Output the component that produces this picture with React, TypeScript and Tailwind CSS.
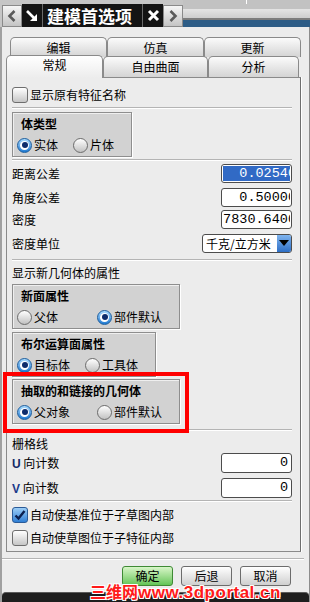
import type { ReactNode } from "react";

const cjk = "font-['Noto_Sans_CJK_SC','Noto_Sans',sans-serif]";

function Radio({ on }: { on?: boolean }) {
  return on ? (
    <span className="w-[15px] h-[15px] rounded-full border border-[#1d5e9e] bg-gradient-to-b from-[#a8dcff] to-[#1a7ad2] flex items-center justify-center shrink-0">
      <span className="w-[9px] h-[9px] rounded-full bg-white flex items-center justify-center">
        <span className="w-[6px] h-[6px] rounded-full bg-[#0c2c6c]" />
      </span>
    </span>
  ) : (
    <span className="w-[15px] h-[15px] rounded-full border border-[#6c6c6c] bg-gradient-to-b from-white to-[#c2c2c2] shrink-0" />
  );
}

function Check({ on }: { on?: boolean }) {
  return on ? (
    <span className="w-[16px] h-[16px] rounded-[3px] border border-[#2b5b98] bg-gradient-to-b from-[#9bcdf6] to-[#2f7fd4] flex items-center justify-center shrink-0">
      <svg width="12" height="12" viewBox="0 0 12 12">
        <path d="M1.5 6.5 L4.5 9.5 L10.5 2" fill="none" stroke="#0b1f4e" strokeWidth="2.4" />
      </svg>
    </span>
  ) : (
    <span className="w-[16px] h-[16px] rounded-[3px] border border-[#6e6e6e] bg-gradient-to-b from-white to-[#c6c6c6] shrink-0" />
  );
}

function Sep() {
  return <div className="h-[2px] border-t border-[#b4b4b4] border-b border-b-white" />;
}

function Group({ title, w, first, opts }: { title: string; w: string; first: string; opts: [string, boolean][] }) {
  return (
    <div className={`${w} h-[45px] bg-[#d2d2d2] border border-[#8e8e8e] shadow-[inset_1px_1px_0_#efefef,1px_1px_0_#ffffff] pl-[4px] pt-[3px]`}>
      <div className="h-[16px] pl-[4px] text-[12px] leading-[16px] font-bold">{title}</div>
      <div className="flex items-center mt-[5px] h-[16px]">
        <div className={`flex items-center gap-[2px] ${first}`}>
          <Radio on={opts[0][1]} />
          <span className="text-[12px]">{opts[0][0]}</span>
        </div>
        <div className="flex items-center gap-[2px]">
          <Radio on={opts[1][1]} />
          <span className="text-[12px]">{opts[1][0]}</span>
        </div>
      </div>
    </div>
  );
}

function Field({ label, children, mt }: { label: ReactNode; children: ReactNode; mt: string }) {
  return (
    <div className={`flex items-center justify-between h-[19px] ${mt}`}>
      <span className="text-[12px]">{label}</span>
      {children}
    </div>
  );
}

function Input({ value, sel, pad }: { value: string; sel?: boolean; pad?: boolean }) {
  return (
    <div className="w-[71px] h-full rounded-[3px] border border-[#4c4c4c] bg-white p-[1px] overflow-hidden">
      <div
        className={`h-full w-full flex items-center justify-end overflow-hidden font-['Liberation_Mono',monospace] text-[13.5px] leading-none ${
          sel ? "bg-[#316ac5] text-white" : "text-black"
        }`}
      >
        <span className={`whitespace-nowrap ${pad ? "mr-[2px]" : "-mr-[6px]"}`}>{value}</span>
      </div>
    </div>
  );
}

function Tab({ label, w, h, sel }: { label: string; w: string; h: string; sel?: boolean }) {
  return (
    <div
      className={`${w} ${h} rounded-t-[5px] border border-b-0 border-[#8a8a8a] flex items-center justify-center text-[12px] ${
        sel ? "bg-gradient-to-b from-white to-[#ececec] relative z-10 -mb-[1px] pb-[4px]" : "bg-gradient-to-b from-[#fbfbfb] to-[#d4d4d4]"
      }`}
    >
      {label}
    </div>
  );
}

function Btn({ label, ok }: { label: string; ok?: boolean }) {
  return (
    <div
      className={`w-[51px] h-[20px] rounded-[3px] border flex items-center justify-center text-[12px] ${
        ok ? "border-[#3f8a35] bg-gradient-to-b from-[#d8f6c8] to-[#62c456]" : "border-[#6c6c6c] bg-gradient-to-b from-white to-[#cfcfcf]"
      }`}
    >
      {label}
    </div>
  );
}

export default function App() {
  return (
    <div className={`w-[310px] h-[602px] bg-[#ececec] flex flex-col overflow-hidden relative text-black ${cjk}`}>
      {/* 标题栏 */}
      <div className="h-[27px] flex shrink-0 bg-[#c6c6c6]">
        <div className="flex items-end pl-[2px]">
          <div className="w-[20px] h-[22px] border border-[#8a8a8a] bg-gradient-to-b from-[#f6f6f6] to-[#c4c4c4] flex items-center justify-center">
            <svg width="10" height="14" viewBox="0 0 10 14">
              <path d="M7.5 2 L2.5 7 L7.5 12" fill="none" stroke="#5a5a5a" strokeWidth="2.6" />
            </svg>
          </div>
          <div className="h-[23px] flex bg-[#141414]">
            <div className="w-[21px] flex items-center justify-center border-r border-[#6a6a6a]">
              <svg width="14" height="14" viewBox="0 0 14 14">
                <path d="M2 2 L9 9" stroke="white" strokeWidth="2.6" />
                <path d="M5 12 L12 12 L12 5 Z" fill="white" />
              </svg>
            </div>
            <div className="w-[99px] flex items-center pl-[4px] text-white text-[17px] font-bold">建模首选项</div>
            <div className="w-[21px] flex items-center justify-center border-l border-[#6a6a6a]">
              <svg width="13" height="13" viewBox="0 0 13 13">
                <path d="M2 2 L11 11 M11 2 L2 11" stroke="white" strokeWidth="3" />
              </svg>
            </div>
          </div>
          <div className="w-[20px] h-[22px] border border-[#8a8a8a] bg-gradient-to-b from-[#f6f6f6] to-[#c4c4c4] flex items-center justify-center">
            <svg width="10" height="14" viewBox="0 0 10 14">
              <path d="M2.5 2 L7.5 7 L2.5 12" fill="none" stroke="#5a5a5a" strokeWidth="2.6" />
            </svg>
          </div>
        </div>
        <div className="flex-1 flex flex-col">
          <div className="h-[9px] bg-[#c2c2c2] relative">
            <div className="absolute left-[63px] top-0 w-[1px] h-[4px] bg-white" />
          </div>
          <div className="h-[9px] bg-gradient-to-b from-[#e4e4e4] to-[#cdcdcd]" />
          <div className="h-[2px] bg-[#7c7c7c]" />
          <div className="flex-1 bg-[#2d5c86]" />
        </div>
      </div>

      {/* 主面板 */}
      <div className="flex-1 flex flex-col border-l-2 border-l-[#a0a0a0] border-r border-r-[#8c8c8c]">
        <div className="pt-[10px] pl-[6px]">
          <div className="flex h-[20px] ml-[2px]">
            <Tab label="编辑" w="w-[97px]" h="h-[20px]" />
            <Tab label="仿真" w="w-[97px]" h="h-[20px]" />
            <Tab label="更新" w="w-[97px]" h="h-[20px]" />
          </div>
          <div className="flex items-end h-[22px] -mt-[2px] -ml-[2px]">
            <Tab label="常规" w="w-[97px]" h="h-[23px]" sel />
            <Tab label="自由曲面" w="w-[105px]" h="h-[21px]" />
            <Tab label="分析" w="w-[91px]" h="h-[21px]" />
          </div>

          <div className="w-[295px] -ml-[2px] border border-[#8a8a8a] border-r-[#6e6e6e] pl-[5px] pr-[8px] pb-[6px] shadow-[1px_0_0_#ffffff]">
            <div className="flex items-center gap-[2px] mt-[9px] h-[15px]">
              <Check />
              <span className="text-[12px]">显示原有特征名称</span>
            </div>
            <div className="mt-[5px]">
              <Sep />
            </div>
            <div className="mt-[3px]">
              <Group title="体类型" w="w-[120px]" first="w-[56px]" opts={[["实体", true], ["片体", false]]} />
            </div>
            <div className="mt-[2px]">
              <Sep />
            </div>

            <Field label="距离公差" mt="mt-[3px]">
              <Input value="0.02540" sel />
            </Field>
            <Field label="角度公差" mt="mt-[5px]">
              <Input value="0.50000" />
            </Field>
            <Field label="密度" mt="mt-[3px]">
              <Input value="7830.6400" />
            </Field>
            <Field label="密度单位" mt="mt-[5px]">
              <div className="w-[90px] h-full rounded-[3px] border border-[#4c4c4c] bg-white flex items-center overflow-hidden">
                <span className="flex-1 pl-[3px] text-[12px] whitespace-nowrap">千克/立方米</span>
                <div className="w-[15px] h-full border-l border-white bg-gradient-to-b from-[#7fb4ee] to-[#2d6fc6] flex items-center justify-center">
                  <svg width="10" height="7" viewBox="0 0 10 7">
                    <path d="M0 0 L10 0 L5 6 Z" fill="#000" />
                  </svg>
                </div>
              </div>
            </Field>
            <div className="mt-[6px]">
              <Sep />
            </div>
            <div className="mt-[4px] h-[16px] text-[12px] leading-[16px]">显示新几何体的属性</div>
            <div className="mt-[3px]">
              <Group title="新面属性" w="w-[168px]" first="w-[80px]" opts={[["父体", false], ["部件默认", true]]} />
            </div>
            <div className="mt-[3px]">
              <Group title="布尔运算面属性" w="w-[144px]" first="w-[68px]" opts={[["目标体", true], ["工具体", false]]} />
            </div>
            <div className="mt-[2px]">
              <Group title="抽取的和链接的几何体" w="w-[168px]" first="w-[80px]" opts={[["父对象", true], ["部件默认", false]]} />
            </div>
            <div className="mt-[5px]">
              <Sep />
            </div>
            <div className="mt-[5px] h-[16px] text-[12px] leading-[16px]">栅格线</div>
            <div className="flex items-center justify-between h-[20px] mt-[1px]">
              <span className="text-[12px]">
                <span className="font-['Liberation_Sans',sans-serif] font-bold text-[#142a66]">U</span> 向计数
              </span>
              <Input value="0" pad />
            </div>
            <div className="flex items-center justify-between h-[20px] mt-[5px]">
              <span className="text-[12px]">
                <span className="font-['Liberation_Sans',sans-serif] font-bold text-[#1a3a8a]">V</span> 向计数
              </span>
              <Input value="0" pad />
            </div>
            <div className="mt-[2px]">
              <Sep />
            </div>
            <div className="flex items-center gap-[2px] mt-[5px] h-[15px]">
              <Check on />
              <span className="text-[12px]">自动使基准位于子草图内部</span>
            </div>
            <div className="flex items-center gap-[2px] mt-[8px] h-[15px]">
              <Check />
              <span className="text-[12px]">自动使草图位于子特征内部</span>
            </div>
          </div>
        </div>

        <div className="mt-[6px] w-[302px]">
          <Sep />
        </div>
        <div className="mt-[6px] flex justify-end gap-[8px] pr-[18px]">
          <Btn label="确定" ok />
          <Btn label="后退" />
          <Btn label="取消" />
        </div>
        <div className="mt-auto h-[10px] bg-[#1e1e1e] rounded-t-[4px] border-t border-[#5a5a5a]" />
      </div>

      {/* 红框标注 */}
      <div className="absolute left-[3px] top-[372px] w-[186px] h-[61px] border-4 border-[#ff0000]" />

      {/* 水印 */}
      <div className="absolute left-[90px] top-[583px] leading-[16px] text-[#ff1a1a] font-bold whitespace-nowrap [text-shadow:1px_1px_0_#fff,-1px_-1px_0_#fff,1px_-1px_0_#fff,-1px_1px_0_#fff]">
        <span className="text-[16px]">三维网</span>
        <span className="font-['Liberation_Sans',sans-serif] text-[17px] tracking-[0.5px]">www.3dportal.cn</span>
      </div>
    </div>
  );
}
